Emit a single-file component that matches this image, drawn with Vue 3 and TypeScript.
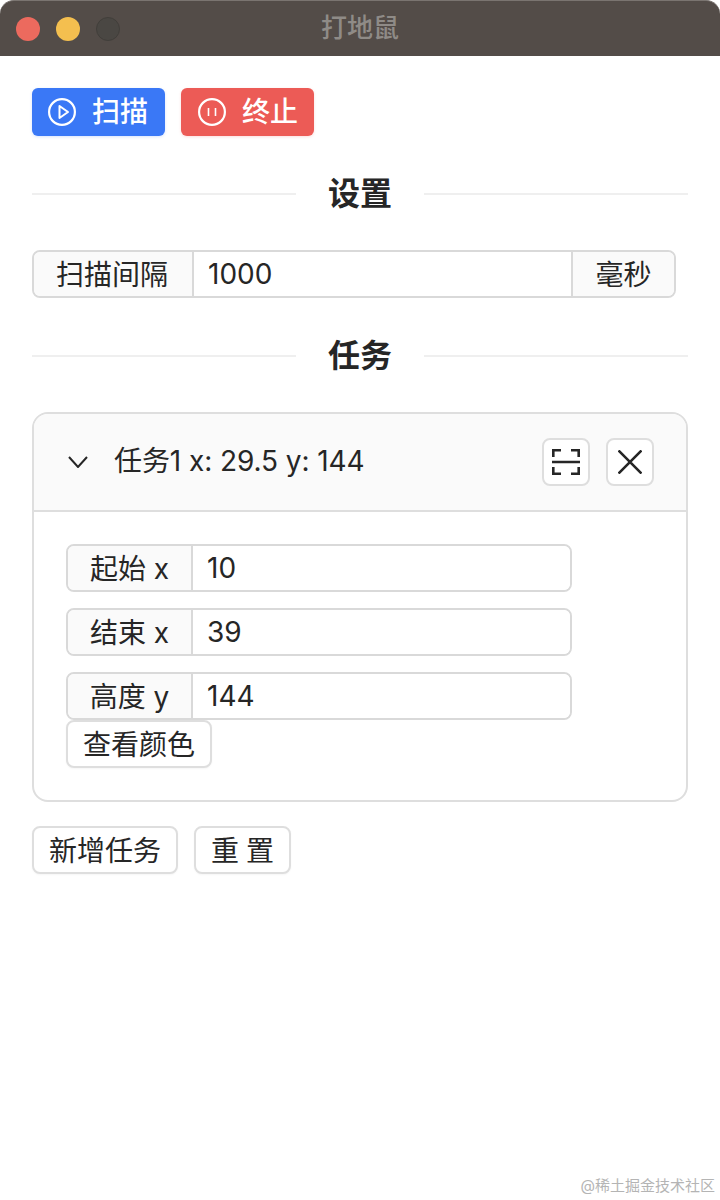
<script setup lang="ts">
import { ref } from "vue";

interface Field {
  label: string;
  value: string;
}

const fields = ref<Field[]>([
  { label: "起始 x", value: "10" },
  { label: "结束 x", value: "39" },
  { label: "高度 y", value: "144" },
]);
</script>

<template>
  <div class="window">
    <header class="titlebar">
      <span class="light red"></span>
      <span class="light yellow"></span>
      <span class="light off"></span>
      <span class="window-title">打地鼠</span>
    </header>

    <main class="content">
      <div class="actions">
        <button type="button" class="btn-solid is-blue">
          <svg class="solid-icon" viewBox="0 0 28 28" fill="none" stroke="currentColor" stroke-width="2.2">
            <circle cx="14" cy="14" r="12.9" />
            <path d="M11.5 8 L20 14 L11.5 20 Z" stroke-width="2" stroke-linejoin="round" />
          </svg>
          <span>扫描</span>
        </button>
        <button type="button" class="btn-solid is-red">
          <svg class="solid-icon" viewBox="0 0 28 28" fill="none" stroke="currentColor" stroke-width="2.2">
            <circle cx="14" cy="14" r="12.9" />
            <path d="M10.5 10 V18 M17.5 10 V18" stroke-width="1.6" />
          </svg>
          <span>终止</span>
        </button>
      </div>

      <div class="divider"><span>设置</span></div>

      <div class="input-group interval">
        <span class="addon interval-label">扫描间隔</span>
        <input class="field" value="1000" />
        <span class="addon unit">毫秒</span>
      </div>

      <div class="divider"><span>任务</span></div>

      <section class="task">
        <div class="task-head">
          <svg class="chevron" viewBox="0 0 20 12" fill="none" stroke="currentColor" stroke-width="2">
            <polyline points="1 1 10 11 19 1" />
          </svg>
          <span class="task-title">任务1 x: 29.5 y: 144</span>
          <button type="button" class="btn-icon" title="选择">
            <svg viewBox="0 0 28 26" width="28" height="26" fill="none" stroke="currentColor" stroke-width="2.6">
              <path d="M1.3 8 V1.3 H9 M19 1.3 H26.7 V8 M1.3 18 V24.7 H9 M19 24.7 H26.7 V18" />
              <path d="M0 13 H28" />
            </svg>
          </button>
          <button type="button" class="btn-icon" title="删除">
            <svg viewBox="0 0 24 24" width="24" height="24" fill="none" stroke="currentColor" stroke-width="2.6">
              <path d="M0.5 0.5 L23.5 23.5 M23.5 0.5 L0.5 23.5" />
            </svg>
          </button>
        </div>
        <div class="task-body">
          <div class="rows">
            <div v-for="f in fields" :key="f.label" class="input-group">
              <span class="addon row-label">{{ f.label }}</span>
              <input class="field" :value="f.value" />
            </div>
          </div>
          <button type="button" class="btn-plain">查看颜色</button>
        </div>
      </section>

      <div class="footer-actions">
        <button type="button" class="btn-plain">新增任务</button>
        <button type="button" class="btn-plain spaced">重 置</button>
      </div>
    </main>

    <span class="watermark">@稀土掘金技术社区</span>
  </div>
</template>

<style>
html,
body {
  margin: 0;
  background: #fff;
}
</style>

<style scoped>
.window {
  position: relative;
  width: 720px;
  height: 1200px;
  overflow: hidden;
  background: #fff;
  color: #262626;
  font-family: Inter, "Noto Sans CJK SC", sans-serif;
  font-size: 28px;
}

.titlebar {
  position: relative;
  display: flex;
  align-items: center;
  gap: 16px;
  height: 56px;
  padding-left: 16px;
  box-sizing: border-box;
  background: #534c48;
  border-top: 1px solid #7a7470;
  border-radius: 14px 14px 0 0;
}

.light {
  width: 24px;
  height: 24px;
  border-radius: 50%;
  box-sizing: border-box;
}

.light.red {
  background: #ec6a5e;
}

.light.yellow {
  background: #f4bf4f;
}

.light.off {
  background: #4a4743;
  border: 1px solid #413e3a;
}

.window-title {
  position: absolute;
  left: 0;
  right: 0;
  padding-bottom: 6px;
  text-align: center;
  font-size: 26px;
  font-weight: 500;
  color: #8f8b87;
}

.content {
  padding: 32px;
}

.actions {
  display: flex;
  gap: 16px;
}

button {
  font-family: inherit;
  font-size: 28px;
  margin: 0;
  cursor: pointer;
}

.btn-solid {
  display: flex;
  align-items: center;
  gap: 16px;
  width: 133px;
  height: 48px;
  padding: 0 16px;
  border: 0;
  border-radius: 6px;
  color: #fff;
  font-weight: 500;
}

.btn-solid span {
  padding-bottom: 4px;
}

.btn-solid.is-blue {
  background: #3a78f6;
  box-shadow: 0 1px 3px rgba(58, 120, 246, 0.2);
}

.btn-solid.is-red {
  background: #ec5b56;
  padding-left: 17px;
  box-shadow: 0 1px 3px rgba(236, 91, 86, 0.2);
}

.solid-icon {
  flex: none;
  width: 28px;
  height: 28px;
}

.divider {
  display: flex;
  align-items: center;
  gap: 32px;
  height: 44px;
  margin: 36px 0 34px;
  font-size: 32px;
  font-weight: 600;
  color: #262626;
}

.divider span {
  padding-bottom: 6px;
}

.divider::before,
.divider::after {
  content: "";
  flex: 1;
  height: 2px;
  background: #efefef;
}

.input-group {
  display: flex;
  height: 48px;
  box-sizing: border-box;
  border: 2px solid #d9d9d9;
  border-radius: 8px;
  overflow: hidden;
}

.interval {
  width: 644px;
}

.addon {
  display: flex;
  align-items: center;
  justify-content: center;
  flex: none;
  box-sizing: border-box;
  padding-bottom: 2px;
  background: #fafafa;
}

.interval-label {
  width: 160px;
  padding-right: 2px;
  border-right: 2px solid #d9d9d9;
}

.unit {
  width: 103px;
  border-left: 2px solid #d9d9d9;
}

.row-label {
  width: 125px;
  border-right: 2px solid #d9d9d9;
}

.field {
  flex: 1;
  min-width: 0;
  border: 0;
  outline: 0;
  padding: 0 14px;
  background: #fff;
  color: inherit;
  font: inherit;
}

.task {
  border: 2px solid #dedede;
  border-radius: 16px;
  overflow: hidden;
}

.task-head {
  display: flex;
  align-items: center;
  gap: 16px;
  height: 96px;
  padding: 0 32px;
  box-sizing: content-box;
  background: #fafafa;
  border-bottom: 2px solid #dedede;
}

.chevron {
  width: 20px;
  height: 12px;
  margin: 0 10px 0 2px;
  flex: none;
}

.task-title {
  flex: 1;
  padding-bottom: 6px;
  letter-spacing: -0.08px;
}

.btn-icon {
  display: flex;
  align-items: center;
  justify-content: center;
  width: 48px;
  height: 48px;
  padding: 0;
  background: #fff;
  color: #262626;
  border: 2px solid #dedede;
  border-radius: 8px;
}

.task-body {
  padding: 32px;
}

.rows {
  display: grid;
  gap: 16px;
  width: 506px;
}

.btn-plain {
  display: block;
  height: 48px;
  padding: 0 15px 2px;
  background: #fff;
  color: #262626;
  border: 2px solid #dedede;
  border-radius: 8px;
  box-shadow: 0 1px 2px rgba(0, 0, 0, 0.04);
}

.btn-plain.spaced {
  word-spacing: -1px;
}

.footer-actions {
  display: flex;
  gap: 16px;
  margin-top: 24px;
}

.watermark {
  position: absolute;
  right: 5px;
  bottom: 5px;
  font-size: 15px;
  color: #b4b4b4;
}
</style>
